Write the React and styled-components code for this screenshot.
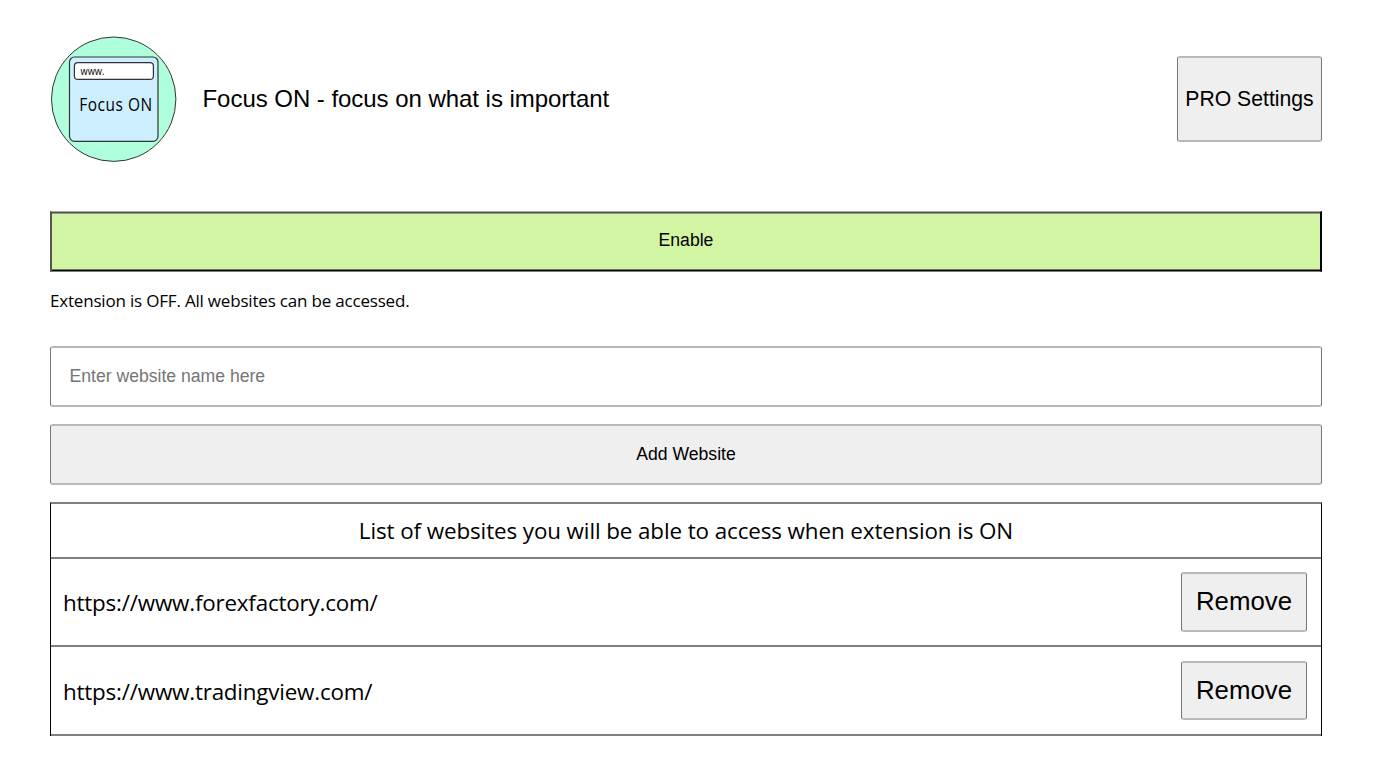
import React, { useState } from 'react';
import styled, { createGlobalStyle } from 'styled-components';

const GlobalStyle = createGlobalStyle`
  * {
    box-sizing: border-box;
  }

  body {
    margin: 0;
    background: #fff;
    color: #000;
    font-family: "Open Sans", "Noto Sans", sans-serif;
  }
`;

const Page = styled.main`
  display: flex;
  flex-direction: column;
  padding: 36px 51px 0 50px;
`;

const Header = styled.header`
  display: flex;
  align-items: center;
  height: 126px;
  margin-bottom: 49px;
`;

const Logo = styled.svg`
  flex: none;
  width: 127px;
  height: 126px;
`;

const Title = styled.h1`
  flex: 1;
  margin: 0 0 0 25.5px;
  font: 400 24px/28px "Liberation Sans", Arial, sans-serif;
  letter-spacing: -0.04px;
`;

const Button = styled.button`
  display: flex;
  align-items: center;
  justify-content: center;
  padding: 0;
  background: #efefef;
  border: solid #b8b8b8;
  border-width: 2px 1px;
  border-left-color: #767676;
  border-right-color: #767676;
  border-radius: 3px;
  color: #000;
  font: 400 17.6px/20px "Liberation Sans", Arial, sans-serif;
  cursor: pointer;
`;

const ProButton = styled(Button)`
  width: 145px;
  height: 86px;
  font-size: 21.2px;
  line-height: 24px;
  padding-bottom: 1px;
`;

const ToggleButton = styled(Button)`
  height: 61px;
  padding-bottom: 3px;
  background: ${props => (props.$on ? '#f5a9a9' : '#d2f5a4')};
  border-style: solid;
  border-width: 1px 2px;
  border-color: #a9a9ab #000 #807c84 #555;
  border-radius: 0;
  box-shadow: inset 0 1px #525155, inset 0 2px #8f9f7c, inset 0 -1px #000, inset 0 -2px #698052;
`;

const Status = styled.p`
  margin: 17px 0 33px;
  font-size: 17px;
  line-height: 24px;
  letter-spacing: -0.19px;
`;

const WebsiteInput = styled.input`
  height: 61px;
  margin-bottom: 17px;
  padding: 0 18px 0 18.5px;
  background: #fff;
  border: solid #b8b8b8;
  border-width: 2px 1px;
  border-left-color: #767676;
  border-right-color: #767676;
  border-radius: 3px;
  outline: none;
  font: 400 17.6px/20px "Liberation Sans", Arial, sans-serif;

  &::placeholder {
    color: #757575;
    opacity: 1;
  }
`;

const AddButton = styled(Button)`
  height: 61px;
  margin-bottom: 17px;
  padding-bottom: 1px;
`;

const List = styled.section`
  border: solid #808080;
  border-width: 2px 1px 0;
  border-left-color: #000;
  border-right-color: #000;
`;

const ListHeading = styled.h2`
  height: 55px;
  margin: 0;
  padding-top: 11px;
  border-bottom: 2px solid #808080;
  font-size: 22.4px;
  font-weight: 400;
  line-height: 32px;
  letter-spacing: -0.1px;
  text-align: center;
`;

const Row = styled.div`
  display: flex;
  align-items: center;
  justify-content: space-between;
  height: ${props => props.$height}px;
  padding: 0 14px 0 12px;
  border-bottom: 2px solid #808080;
`;

const Url = styled.span`
  padding-top: 2px;
  font-size: 22.4px;
  line-height: 32px;
  letter-spacing: -0.2px;
`;

const RemoveButton = styled(Button)`
  width: 126px;
  height: ${props => props.$height}px;
  padding-bottom: 2px;
  font-size: 25.8px;
  line-height: 30px;
`;

function FocusLogo() {
  return (
    <Logo viewBox="50 36 127 126">
      <circle cx="113.7" cy="99.2" r="62.2" fill="#b0ffdc" stroke="#333" />
      <rect x="69.5" y="57" width="88.5" height="84.3" rx="5" fill="#cceeff" stroke="#333" strokeWidth="1.2" />
      <rect x="74.4" y="62.6" width="79" height="16.8" rx="3.5" fill="#fff" stroke="#333" strokeWidth="1.2" />
      <text x="80.5" y="74.6" fontSize="10.5" textLength="24" lengthAdjust="spacingAndGlyphs">www.</text>
      <g transform="translate(79.2 111.3) scale(0.88 1)">
        <text fontSize="17.6" textLength="83" lengthAdjust="spacing">Focus ON</text>
      </g>
    </Logo>
  );
}

const initialSites = ['https://www.forexfactory.com/', 'https://www.tradingview.com/'];

export default function App() {
  const [enabled, setEnabled] = useState(false);
  const [site, setSite] = useState('');
  const [sites, setSites] = useState(initialSites);

  const addSite = () => {
    if (!site.trim()) return;
    setSites([...sites, site.trim()]);
    setSite('');
  };

  return (
    <>
      <GlobalStyle />
      <Page>
        <Header>
          <FocusLogo />
          <Title>Focus ON - focus on what is important</Title>
          <ProButton>PRO Settings</ProButton>
        </Header>
        <ToggleButton $on={enabled} onClick={() => setEnabled(!enabled)}>
          {enabled ? 'Disable' : 'Enable'}
        </ToggleButton>
        <Status>
          {enabled
            ? 'Extension is ON. Only listed websites can be accessed.'
            : 'Extension is OFF. All websites can be accessed.'}
        </Status>
        <WebsiteInput
          placeholder="Enter website name here"
          value={site}
          onChange={e => setSite(e.target.value)}
        />
        <AddButton onClick={addSite}>Add Website</AddButton>
        <List>
          <ListHeading>List of websites you will be able to access when extension is ON</ListHeading>
          {sites.map((url, i) => (
            <Row key={url} $height={i === 0 ? 88 : 89}>
              <Url>{url}</Url>
              <RemoveButton
                $height={i === 0 ? 60 : 59}
                onClick={() => setSites(sites.filter(s => s !== url))}
              >
                Remove
              </RemoveButton>
            </Row>
          ))}
        </List>
      </Page>
    </>
  );
}
